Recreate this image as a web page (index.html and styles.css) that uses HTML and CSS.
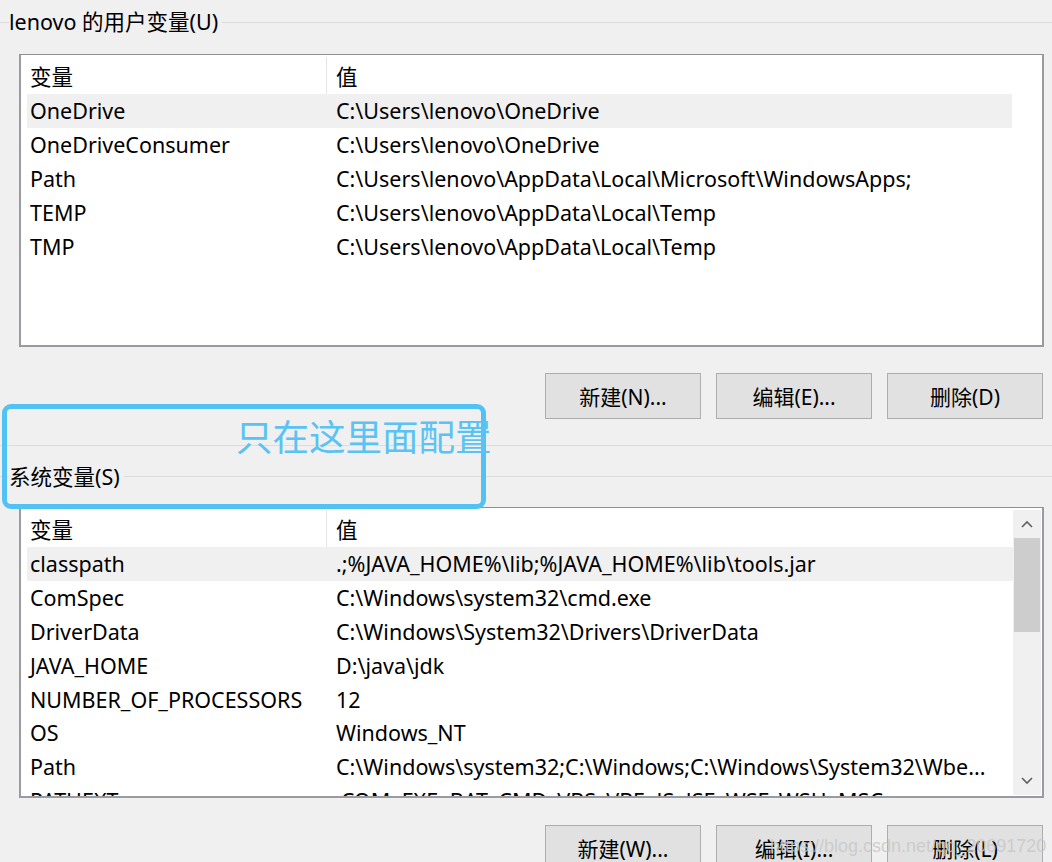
FILE: index.html
```html
<!DOCTYPE html>
<html lang="zh-CN">
<head>
<meta charset="utf-8">
<title>环境变量</title>
<link rel="stylesheet" href="styles.css">
</head>
<body>
<div class="dialog">
  <section class="group user-group">
    <div class="group-title"><span class="lead"></span><span class="label">lenovo 的用户变量(U)</span><span class="rule"></span></div>
    <div class="listbox user-list">
      <div class="list-inner">
        <div class="row head"><div class="c1">变量</div><div class="c2">值</div></div>
        <div class="row sel"><div class="c1">OneDrive</div><div class="c2">C:\Users\lenovo\OneDrive</div></div>
        <div class="row"><div class="c1">OneDriveConsumer</div><div class="c2">C:\Users\lenovo\OneDrive</div></div>
        <div class="row"><div class="c1">Path</div><div class="c2">C:\Users\lenovo\AppData\Local\Microsoft\WindowsApps;</div></div>
        <div class="row"><div class="c1">TEMP</div><div class="c2">C:\Users\lenovo\AppData\Local\Temp</div></div>
        <div class="row"><div class="c1">TMP</div><div class="c2">C:\Users\lenovo\AppData\Local\Temp</div></div>
      </div>
    </div>
    <div class="buttons">
      <button class="btn">新建(N)...</button>
      <button class="btn">编辑(E)...</button>
      <button class="btn">删除(D)</button>
    </div>
  </section>
  <div class="group-bottom"></div>
  <section class="group sys-group">
    <div class="group-title"><span class="lead"></span><span class="label">系统变量(S)</span><span class="rule"></span></div>
    <div class="listbox sys-list">
      <div class="list-inner">
        <div class="row head"><div class="c1">变量</div><div class="c2">值</div></div>
        <div class="row sel"><div class="c1">classpath</div><div class="c2">.;%JAVA_HOME%\lib;%JAVA_HOME%\lib\tools.jar</div></div>
        <div class="row"><div class="c1">ComSpec</div><div class="c2">C:\Windows\system32\cmd.exe</div></div>
        <div class="row"><div class="c1">DriverData</div><div class="c2">C:\Windows\System32\Drivers\DriverData</div></div>
        <div class="row"><div class="c1">JAVA_HOME</div><div class="c2">D:\java\jdk</div></div>
        <div class="row"><div class="c1">NUMBER_OF_PROCESSORS</div><div class="c2">12</div></div>
        <div class="row"><div class="c1">OS</div><div class="c2">Windows_NT</div></div>
        <div class="row"><div class="c1">Path</div><div class="c2">C:\Windows\system32;C:\Windows;C:\Windows\System32\Wbe...</div></div>
        <div class="row"><div class="c1">PATHEXT</div><div class="c2">.COM;.EXE;.BAT;.CMD;.VBS;.VBE;.JS;.JSE;.WSF;.WSH;.MSC</div></div>
      </div>
      <div class="scrollbar">
        <div class="arrow up"><svg width="12" height="8" viewBox="0 0 12 8"><path d="M1 7 L6 2 L11 7" fill="none" stroke="#606060" stroke-width="1.6"/></svg></div>
        <div class="track"><div class="thumb"></div></div>
        <div class="arrow down"><svg width="12" height="8" viewBox="0 0 12 8"><path d="M1 1 L6 6 L11 1" fill="none" stroke="#606060" stroke-width="1.6"/></svg></div>
      </div>
    </div>
    <div class="buttons">
      <button class="btn">新建(W)...</button>
      <button class="btn">编辑(I)...</button>
      <button class="btn">删除(L)</button>
    </div>
  </section>
  <div class="note"><span class="note-text">只在这里面配置</span></div>
  <div class="watermark">https://blog.csdn.net/qq_20691720</div>
</div>
</body>
</html>
```

FILE: styles.css
```css
* { box-sizing: border-box; }
html, body { margin: 0; padding: 0; }
body {
  background: #f0f0f0;
  width: 1052px;
  height: 862px;
  overflow: hidden;
  font-family: "Noto Sans", "Noto Sans CJK SC", sans-serif;
  font-size: 21.5px;
  color: #000;
}
.dialog { position: relative; width: 1052px; height: 862px; }

.group-title {
  display: flex;
  align-items: center;
  height: 44px;
}
.group-title .lead { width: 9px; height: 1px; background: #dcdcdc; }
.group-title .label { padding-right: 4px; line-height: 24px; }
.group-title .rule { flex: 1; height: 1px; background: #dcdcdc; }

.user-group .group-title { height: 44px; }
.user-group .listbox { margin-top: 10px; height: 293px; }

.listbox {
  margin-left: 19px;
  width: 1025px;
  background: #fff;
  border-top: 1px solid #8e8f94;
  border-left: 2px solid #9a9ba0;
  border-right: 2px solid #9a9ba0;
  border-bottom: 2px solid #9a9ba0;
  display: flex;
  overflow: hidden;
}
.list-inner {
  padding: 2px 0 0 6px;
  width: 991px;
}
.row {
  display: grid;
  grid-template-columns: 299px 686px;
  height: 33.8px;
  align-items: center;
  white-space: nowrap;
}
.row .c1 { padding-left: 3px; }
.row .c2 { padding-left: 10px; }
.row.head { height: 37px; }
.row.head .c2 { border-left: 1px solid #e5e5e5; height: 100%; display: flex; align-items: center; padding-left: 9px; }
.row.sel { background: #f0f0f0; }

.buttons {
  display: flex;
  justify-content: flex-end;
  gap: 15px;
  padding-right: 9px;
  margin-top: 26px;
}
.btn {
  width: 156px;
  height: 46px;
  background: #e1e1e1;
  border: 1px solid #adadad;
  font-family: "Noto Sans", "Noto Sans CJK SC", sans-serif;
  font-size: 21px;
  color: #000;
  padding: 0;
}

.group-bottom {
  margin-top: 26px;
  height: 1px;
  background: #dcdcdc;
}
.sys-group .group-title { height: 61px; }
.sys-group .listbox { margin-top: 0; height: 291px; }
.sys-group .list-inner { width: 992px; }
.sys-group .buttons { margin-top: 27px; }

.scrollbar {
  width: 28px;
  margin-top: 2px;
  margin-bottom: 1px;
  background: #f0f0f0;
  display: flex;
  flex-direction: column;
}
.scrollbar .arrow {
  height: 28px;
  display: flex;
  align-items: center;
  justify-content: center;
}
.scrollbar .track { flex: 1; padding: 0 1px; }
.scrollbar .thumb { height: 94px; background: #cdcdcd; }

.note {
  position: absolute;
  left: 2px;
  top: 404px;
  width: 484px;
  height: 105px;
  border: 5px solid #52c2f5;
  border-radius: 9px;
}
.note-text {
  position: absolute;
  left: 229px;
  top: 6px;
  font-family: "Noto Sans CJK SC", sans-serif;
  font-size: 36.5px;
  line-height: 42px;
  color: #5ac3f3;
  white-space: nowrap;
}
.watermark {
  position: absolute;
  left: 770px;
  top: 836px;
  font-family: "Liberation Sans", sans-serif;
  font-size: 18px;
  color: rgba(200, 200, 200, 0.85);
  white-space: nowrap;
}
```
